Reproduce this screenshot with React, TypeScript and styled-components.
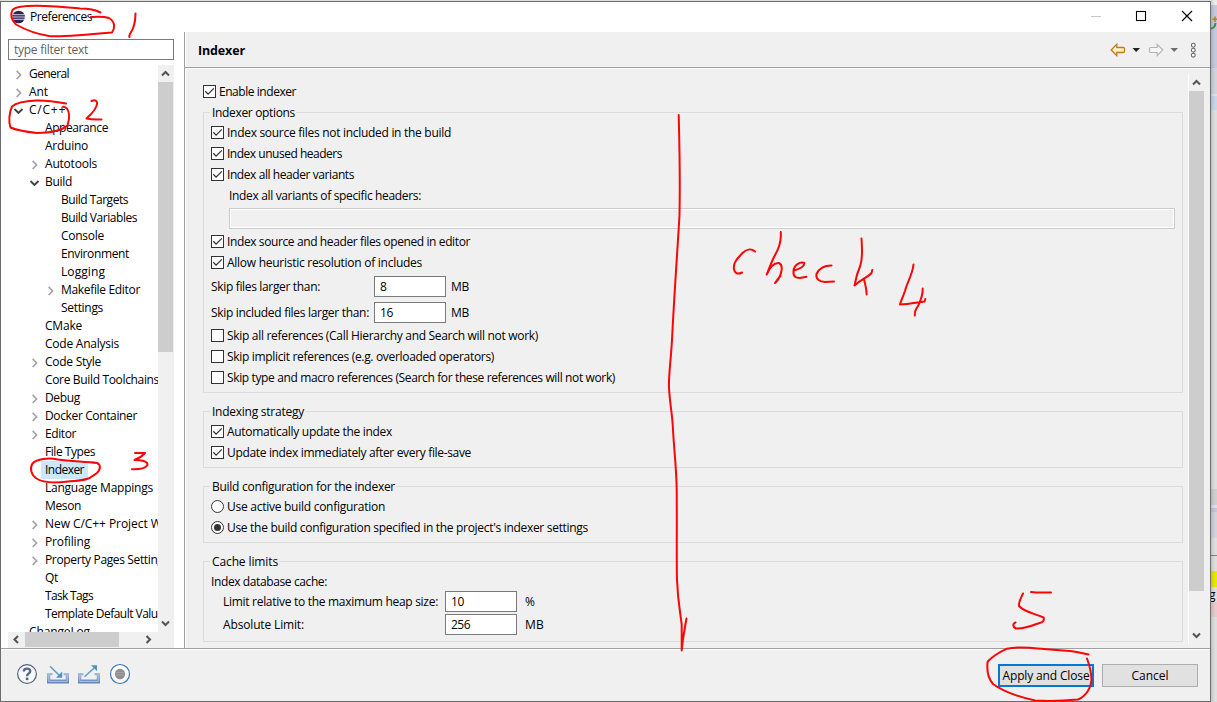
import React, { useLayoutEffect, useRef, useState } from 'react';
import styled, { createGlobalStyle, css } from 'styled-components';

const GlobalStyle = createGlobalStyle`
  *, *::before, *::after { box-sizing: border-box; }
  body { margin: 0; overflow: hidden; }
`;

/* ---------- desktop behind the window ---------- */

const Desktop = styled.div`
  position: relative;
  width: 1217px;
  height: 702px;
  overflow: hidden;
  display: grid;
  grid-template-columns: 1211px 6px;
  background: #dedede;
  font-family: 'Open Sans', 'Noto Sans', sans-serif;
  font-size: 12px;
  line-height: 18px;
  color: #000;
`;

const BackdropStrip = styled.div`
  display: flex;
  flex-direction: column;
  overflow: hidden;
`;

const Band = styled.div<{ $h: number; $c: string }>`
  flex: none;
  height: ${(p) => p.$h}px;
  background: linear-gradient(to right, rgba(0, 0, 0, 0.12), transparent 4px) ${(p) => p.$c};
  line-height: ${(p) => p.$h}px;
  text-indent: -2px;
  svg { display: block; }
`;

/* ---------- window frame ---------- */

const Window = styled.div`
  margin-top: 1px;
  height: 701px;
  display: flex;
  flex-direction: column;
  border: 1px solid #6b6b6b;
  background: #f0f0f0;
`;

const TitleBar = styled.div`
  flex: none;
  height: 30px;
  display: flex;
  align-items: center;
  padding-left: 10px;
  background: #fff;
`;

const TitleText = styled.div`
  margin-left: 4px;
`;

const WindowButtons = styled.div`
  margin-left: auto;
  display: flex;
  svg { display: block; }
`;

const Body = styled.div`
  flex: none;
  height: 616px;
  display: flex;
`;

/* ---------- left navigation ---------- */

const Sidebar = styled.div`
  width: 183px;
  padding: 7px 0 0 7px;
  background: #fff;
`;

const FilterBox = styled.div`
  width: 166px;
  height: 21px;
  border: 1px solid #7a7a7a;
  padding: 0 0 0 5px;
  line-height: 20px;
  color: #5f5f5f;
`;

const TreePane = styled.div`
  margin-top: 5px;
  width: 166px;
  height: 583px;
  display: grid;
  grid-template-columns: 150px 16px;
  grid-template-rows: 567px 16px;
`;

const TreeList = styled.div`
  overflow: hidden;
`;

const TreeRow = styled.div<{ $depth: number }>`
  height: 18px;
  display: flex;
  padding-left: ${(p) => 5 + p.$depth * 16}px;
`;

const ArrowSlot = styled.span`
  flex: none;
  width: 12px;
  height: 18px;
  svg { display: block; }
`;

const TreeLabel = styled.span<{ $selected?: boolean }>`
  padding: 0 4px;
  white-space: nowrap;
  ${(p) => p.$selected && css`background: #cce8ff;`}
`;

/* ---------- scrollbars ---------- */

const VScroll = styled.div<{ $w: number }>`
  width: ${(p) => p.$w}px;
  display: flex;
  flex-direction: column;
  background: #f0f0f0;
  svg { display: block; flex: none; }
`;

const VThumb = styled.div<{ $h: number }>`
  width: 15px;
  height: ${(p) => p.$h}px;
  background: #cdcdcd;
`;

const HScroll = styled.div`
  grid-column: 1 / 3;
  display: flex;
  background: #f0f0f0;
  svg { display: block; flex: none; }
`;

const HThumb = styled.div`
  width: 94px;
  height: 15px;
  margin: 0 22px 0 1px;
  background: #cdcdcd;
`;

const Spacer = styled.div`
  flex: 1;
`;

/* ---------- right page ---------- */

const Page = styled.div`
  flex: 1;
  border-left: 1px solid #a0a0a0;
  box-shadow: inset 1px 0 0 #fff;
  display: flex;
  flex-direction: column;
`;

const PageHeader = styled.div`
  height: 36px;
  display: flex;
  align-items: center;
  padding: 0 8px 0 13px;
  border-bottom: 1px solid #a0a0a0;
  box-shadow: 0 1px 0 #fff;
`;

const PageTitle = styled.div`
  font-size: 12.5px;
  font-weight: 700;
  padding-top: 3px;
`;

const HeaderTools = styled.div`
  margin-left: auto;
  padding-top: 1px;
  svg { display: block; }
`;

const PageContent = styled.div`
  flex: 1;
  display: flex;
  padding: 6px 0 0 18px;
`;

const Form = styled.div`
  width: 980px;
  padding-top: 9px;
`;

const FormScroll = styled.div`
  margin-left: 5px;
  height: 570px;
  border-left: 1px solid #fff;
  display: flex;
`;

const Group = styled.div<{ $h: number; $mt: number }>`
  height: ${(p) => p.$h}px;
  margin-top: ${(p) => p.$mt}px;
  border: 1px solid #dcdcdc;
  padding-left: 7px;
`;

const Legend = styled.div`
  width: max-content;
  height: 18px;
  margin-top: -9px;
  padding: 0 1px 0 2px;
  margin-left: -1px;
  background: #f0f0f0;
`;

const Row = styled.div<{ $h?: number; $mt?: number; $indent?: number }>`
  height: ${(p) => p.$h ?? 21}px;
  margin-top: ${(p) => p.$mt ?? 0}px;
  padding-left: ${(p) => p.$indent ?? 0}px;
  display: flex;
  align-items: center;
  white-space: nowrap;
`;

const CheckBox = styled.span`
  flex: none;
  width: 13px;
  height: 13px;
  margin-right: 3px;
  border: 1px solid #333;
  background: #fff;
  svg { display: block; }
`;

const Radio = styled.span`
  flex: none;
  width: 13px;
  height: 13px;
  margin-right: 3px;
  display: grid;
  place-items: center;
  border: 1px solid #333;
  border-radius: 50%;
  background: #fff;
`;

const RadioDot = styled.span`
  width: 7px;
  height: 7px;
  border-radius: 50%;
  background: #333;
`;

const FieldLabel = styled.span<{ $w: number }>`
  width: ${(p) => p.$w}px;
`;

const NumberField = styled.div`
  width: 72px;
  height: 21px;
  border: 1px solid #7a7a7a;
  background: #fff;
  padding-left: 5px;
  line-height: 19px;
`;

const Unit = styled.span<{ $gap: number }>`
  margin-left: ${(p) => p.$gap}px;
`;

const DisabledField = styled.div`
  width: 946px;
  height: 21px;
  margin: 2px 0 0 18px;
  border: 1px solid #cccccc;
  box-shadow: inset 0 0 0 1px #fff;
`;

/* ---------- footer ---------- */

const Footer = styled.div`
  flex: 1;
  display: flex;
  align-items: flex-start;
  padding: 13px 12px 0 16px;
  border-top: 1px solid #a0a0a0;
  box-shadow: inset 0 1px 0 #fff;
  svg { display: block; margin-top: 1px; }
`;

const PushButton = styled.div<{ $primary?: boolean }>`
  width: 96px;
  height: 23px;
  margin: 2px 0 0 8px;
  display: flex;
  align-items: center;
  justify-content: center;
  white-space: nowrap;
  background: #e1e1e1;
  border: ${(p) => (p.$primary ? '2px solid #0078d7' : '1px solid #adadad')};
`;

const InkLayer = styled.svg`
  position: absolute;
  left: 0;
  top: 0;
  pointer-events: none;
`;

/* ---------- text tracked to a fixed advance ---------- */

const Tracked = styled.span`
  display: inline-block;
  white-space: pre;
`;

function T({ w, children }: { w: number; children: string }) {
  const ref = useRef<HTMLSpanElement>(null);
  const [spacing, setSpacing] = useState(0);
  useLayoutEffect(() => {
    const el = ref.current;
    if (el) setSpacing((w - el.getBoundingClientRect().width) / children.length);
  }, [w, children]);
  return (
    <Tracked ref={ref} style={{ letterSpacing: spacing }}>
      {children}
    </Tracked>
  );
}

/* ---------- small parts ---------- */

function CheckMark() {
  return (
    <svg width="11" height="11" viewBox="0 0 11 11">
      <path d="M1.3 5.3 L4.1 8.1 L9.8 2.4" fill="none" stroke="#333" strokeWidth="1.3" />
    </svg>
  );
}

function Check({ on, w, h, children }: { on?: boolean; w: number; h?: number; children: string }) {
  return (
    <Row $h={h}>
      <CheckBox>{on && <CheckMark />}</CheckBox>
      <T w={w}>{children}</T>
    </Row>
  );
}

function RadioRow({ on, w, children }: { on?: boolean; w: number; children: string }) {
  return (
    <Row>
      <Radio>{on && <RadioDot />}</Radio>
      <T w={w}>{children}</T>
    </Row>
  );
}

type Dir = 'up' | 'down' | 'left' | 'right';
const chevrons: Record<Dir, string> = {
  up: 'M4 10.5 L7.5 7 L11 10.5',
  down: 'M4 6.5 L7.5 10 L11 6.5',
  left: 'M10 4 L6.5 7.5 L10 11',
  right: 'M5.5 4 L9 7.5 L5.5 11',
};

function ScrollArrow({ dir, size = 17 }: { dir: Dir; size?: number }) {
  return (
    <svg width="16" height={size} viewBox={`0 0 16 ${size}`}>
      <path d={chevrons[dir]} fill="none" stroke="#555" strokeWidth="2.1" />
    </svg>
  );
}

interface Node {
  d: number;
  t: string;
  w: number;
  a?: 'open' | 'closed';
  sel?: boolean;
}

const nodes: Node[] = [
  { d: 0, t: 'General', w: 40, a: 'closed' },
  { d: 0, t: 'Ant', w: 19, a: 'closed' },
  { d: 0, t: 'C/C++', w: 37, a: 'open' },
  { d: 1, t: 'Appearance', w: 63 },
  { d: 1, t: 'Arduino', w: 43 },
  { d: 1, t: 'Autotools', w: 52, a: 'closed' },
  { d: 1, t: 'Build', w: 27, a: 'open' },
  { d: 2, t: 'Build Targets', w: 67 },
  { d: 2, t: 'Build Variables', w: 76 },
  { d: 2, t: 'Console', w: 43 },
  { d: 2, t: 'Environment', w: 68 },
  { d: 2, t: 'Logging', w: 44 },
  { d: 2, t: 'Makefile Editor', w: 79, a: 'closed' },
  { d: 2, t: 'Settings', w: 42 },
  { d: 1, t: 'CMake', w: 37 },
  { d: 1, t: 'Code Analysis', w: 74 },
  { d: 1, t: 'Code Style', w: 56, a: 'closed' },
  { d: 1, t: 'Core Build Toolchains', w: 114 },
  { d: 1, t: 'Debug', w: 35, a: 'closed' },
  { d: 1, t: 'Docker Container', w: 92, a: 'closed' },
  { d: 1, t: 'Editor', w: 31, a: 'closed' },
  { d: 1, t: 'File Types', w: 50 },
  { d: 1, t: 'Indexer', w: 39, sel: true },
  { d: 1, t: 'Language Mappings', w: 108 },
  { d: 1, t: 'Meson', w: 36 },
  { d: 1, t: 'New C/C++ Project Wizard', w: 144, a: 'closed' },
  { d: 1, t: 'Profiling', w: 45, a: 'closed' },
  { d: 1, t: 'Property Pages Settings', w: 124, a: 'closed' },
  { d: 1, t: 'Qt', w: 13 },
  { d: 1, t: 'Task Tags', w: 48 },
  { d: 1, t: 'Template Default Values', w: 124 },
  { d: 0, t: 'ChangeLog', w: 61 },
];

function TreeArrow({ kind }: { kind?: 'open' | 'closed' }) {
  return (
    <ArrowSlot>
      {kind && (
        <svg width="12" height="18" viewBox="0 0 12 18">
          {kind === 'open' ? (
            <path d="M1.5 8 L5.5 12 L9.5 8" fill="none" stroke="#404040" strokeWidth="1.8" />
          ) : (
            <path d="M3.6 5.8 L7.6 9.9 L3.6 14" fill="none" stroke="#a6a6a6" strokeWidth="1.7" />
          )}
        </svg>
      )}
    </ArrowSlot>
  );
}

function EclipseIcon() {
  return (
    <svg width="15" height="14" viewBox="0 0 15 14">
      <circle cx="7.6" cy="7" r="6.3" fill="#2c2255" />
      <path d="M1.6 4.700 H13.800 M0.800 7 H14.400 M1.600 9.300 H13.800" stroke="#e8e8f4" strokeWidth="0.9" />
    </svg>
  );
}

function HeaderIcons() {
  return (
    <svg width="92" height="18" viewBox="0 0 92 18">
      <defs>
        <linearGradient id="gold" x1="0" y1="0" x2="0" y2="1">
          <stop offset="0" stopColor="#fff" />
          <stop offset="1" stopColor="#ffe39a" />
        </linearGradient>
      </defs>
      <path
        d="M1.2 9 L6.8 3.4 V6.5 H13.2 Q14.5 6.5 14.5 7.7 V10.3 Q14.5 11.5 13.2 11.5 H6.8 V14.6 Z"
        fill="url(#gold)"
        stroke="#bb7d14"
        strokeWidth="1.3"
      />
      <path d="M22.5 7 H30 L26.2 11 Z" fill="#222" />
      <path
        d="M52.8 9 L47.2 3.4 V6.5 H40.8 Q39.5 6.5 39.5 7.7 V10.3 Q39.5 11.5 40.8 11.5 H47.2 V14.6 Z"
        fill="#f6f6f6"
        stroke="#b4b4b4"
        strokeWidth="1.2"
      />
      <path d="M60.5 7 H68 L64.2 11 Z" fill="#6e6e6e" />
      <g fill="#fff" stroke="#6a6a6a" strokeWidth="1.1">
        <circle cx="83.3" cy="4.2" r="1.9" />
        <circle cx="83.3" cy="9.2" r="1.9" />
        <circle cx="83.3" cy="14.2" r="1.9" />
      </g>
    </svg>
  );
}

function FooterIcons() {
  return (
    <svg width="118" height="22" viewBox="0 0 118 22">
      <defs>
        <linearGradient id="tray" x1="0" y1="0" x2="0" y2="1">
          <stop offset="0" stopColor="#a9bddc" />
          <stop offset="1" stopColor="#5f83bb" />
        </linearGradient>
      </defs>
      <circle cx="10" cy="11" r="9.4" fill="#f7f9fb" stroke="#53647f" strokeWidth="1.2" />
      <path
        d="M6.8 8.6 Q6.8 5.6 10 5.6 Q13.2 5.6 13.2 8.2 Q13.2 9.8 11.4 10.8 Q10.1 11.6 10.1 13.2"
        fill="none"
        stroke="#55688a"
        strokeWidth="2.4"
      />
      <rect x="8.8" y="14.6" width="2.6" height="2.5" fill="#55688a" />
      <g fill="url(#tray)">
        <path d="M30 10 H35.5 V12.3 H33.3 V16.5 H48.7 V12.3 H46.5 V10 H52 V20.6 H30 Z" />
        <path d="M61 10 H66.5 V12.3 H64.3 V16.5 H79.7 V12.3 H77.5 V10 H83 V20.6 H61 Z" />
      </g>
      <path d="M31.8 11.5 V18.500 H50.2 V11.5 M62.8 11.5 V18.500 H81.2 V11.5" fill="none" stroke="#c0cfe6" strokeWidth="0.7" />
      <path d="M33 3.2 L43.2 13.2" stroke="#5b9bc6" strokeWidth="1.5" />
      <path d="M45.2 8.6 V14.8 H39 Z" fill="#4e94c2" />
      <path d="M67.5 13.8 L78 4.3" stroke="#5b9bc6" strokeWidth="1.5" />
      <path d="M80 2.2 V8.2 L74 2.2 Z" fill="#4e94c2" />
      <circle cx="103" cy="11" r="9.5" fill="#fbfcfd" stroke="#4279ae" strokeWidth="1.2" />
      <circle cx="103" cy="11" r="5.2" fill="#8f8f8f" />
      <path d="M98.2 9.6 H107.8 M98 12.2 H108" stroke="#aaa" strokeWidth="0.8" />
    </svg>
  );
}

function Ink() {
  return (
    <InkLayer width="1217" height="702" viewBox="0 0 1217 702">
      <g fill="none" stroke="#fb0505" strokeWidth="2" strokeLinecap="round" strokeLinejoin="round">
        {/* step 1 */}
        <path d="M100.500 12.500 C95 9.500 88 8.500 80 8.500 C70 8 62 6.500 45 6 C30 5.500 16 6 12.500 10 C10 14 11 20 16 24.500 C24 29 36 34 49 36 C62 37 80 35.500 112 32.500 C115 28 115.500 22 109 18 C103 16 98 16.500 91 17" />
        <path d="M135.500 13.500 C135.500 22 133.500 29 130 34 C129 36 129.500 37 129.500 37" />
        {/* step 2 */}
        <path d="M66 103.500 C55 101.500 46 100 36 100.500 C25 101 16 103 12 106.500 C9 113 8.500 122 10.500 127.500 C17 130.500 28 132 37 133 C50 133 62 130 67.500 125.500 C69.500 119 69.500 112 67 108.500 C66 107.500 64 107 63 106.800" />
        <path d="M91.500 101 C94 99.800 97 100.300 97.200 103 C97 109 91 114.500 86.500 118.500 C92 119.800 97 119.300 101.500 119.500" />
        {/* step 3 */}
        <path d="M97.500 463 C82 461.500 70 461 58 459.500 C48 457.500 37 459 32.500 463.500 C29.500 468 31 475 36.500 478.500 C43 483 56 483 68 481.500 C80 480.500 88 480 91 477 C98 473 101 470 99.500 465 C98 462.500 95 462.200 92 462.500" />
        <path d="M135 453 H145 C142 456.500 139 458.500 134.500 460 C141 460 148 461 147.500 465 C145 469 138 469.500 132 469.300" />
        {/* step 4 */}
        <path d="M678.700 115 C679.500 145 680 190 679.500 215 C677.500 250 674.500 290 672 340 C670.500 365 668.500 375 669 388 C670 405 672.500 415 673 430 C674.500 455 676.500 470 676.700 490 C677 530 676.500 565 677 580 C678 605 680.500 612 681.700 625 V650.500 C682.500 640 684.500 630 686.500 618.500" />
        <path d="M755 251.500 C751 248 746 249.500 742.500 253 C738 258 733.500 262 733.800 268 C734.500 274 738 274.500 742 272.500" />
        <path d="M780.800 232 C781.500 243 778 250 774 257 C770 265 768 272 766.700 274.500 C770 267 774 262.500 779 263 C784 265 781 275 778.500 279 L775 283 C777 280 779 277.500 780.500 276" />
        <path d="M794 270.500 C798 269.500 804 267 804.500 263 C800 261.500 794 265 793.500 271 C793 277 796 278 800 278 L806.500 276.800" />
        <path d="M831.500 265.500 C825 265.500 819 268.500 816.500 274 C815.500 279.500 820 282 825 282 L834 281.500" />
        <path d="M861.500 238.500 C862 248 863 257 860.500 265 C857 273 855.500 280 854.500 285.500 C861 279.500 868 277 871.500 273 L872.300 270 M864 279.500 C865.500 285 866.500 290 866.700 294.500" />
        <path d="M913.500 264.500 C912.500 275 907 282 905 291 C903 297 901 300 900 304.500 C908 304.500 917 302.500 924.500 301.500 L925.300 299 M922.700 288.500 C923 296 920.500 301 918 306 C916 310 914.500 309 914.800 315.500" />
        {/* step 5 */}
        <path d="M1023 593.500 C1021 598 1018.500 602 1019 606 C1024 612 1036 614 1043.500 617.500 C1045 621 1042 622.500 1038 623.500 C1030 626.500 1022 629 1016 628.500 C1013 627 1012 624 1015.500 622.500 M1031 592 L1036 592.500 H1051" />
        <path d="M1088.500 654.500 C1080 652.500 1075 651.500 1070 651 C1050 650 1040 648.500 1030 647.800 C1020 647 1012 647.500 1007 648.700 C1000 652 992 657 987.700 661.500 C986.500 670 988 678 993 684 C1001 690 1015 696 1035 700.500 C1050 701.500 1068 700.500 1078 699.500 C1086 696 1091 688 1091.500 680 C1091.500 672 1089 664 1087 658.500" />
      </g>
    </InkLayer>
  );
}

export default function App() {
  return (
    <>
      <GlobalStyle />
      <Desktop>
        <Window>
          <TitleBar>
            <EclipseIcon />
            <TitleText><T w={62}>Preferences</T></TitleText>
            <WindowButtons>
              <svg width="138" height="28" viewBox="0 0 138 28">
                <path d="M19 13.500 H29" stroke="#c8c8c8" />
                <rect x="64.500" y="8.500" width="9" height="9" fill="none" stroke="#000" strokeWidth="1.100" />
                <path d="M110 8 L120 18 M120 8 L110 18" stroke="#000" strokeWidth="1.200" />
              </svg>
            </WindowButtons>
          </TitleBar>
          <Body>
            <Sidebar>
              <FilterBox><T w={74}>type filter text</T></FilterBox>
              <TreePane>
                <TreeList>
                  {nodes.map((n) => (
                    <TreeRow key={n.t} $depth={n.d}>
                      <TreeArrow kind={n.a} />
                      <TreeLabel $selected={n.sel}><T w={n.w}>{n.t}</T></TreeLabel>
                    </TreeRow>
                  ))}
                </TreeList>
                <VScroll $w={16}>
                  <ScrollArrow dir="up" />
                  <VThumb $h={270} />
                  <Spacer />
                  <ScrollArrow dir="down" />
                </VScroll>
                <HScroll>
                  <ScrollArrow dir="left" size={16} />
                  <HThumb />
                  <ScrollArrow dir="right" size={16} />
                </HScroll>
              </TreePane>
            </Sidebar>
            <Page>
              <PageHeader>
                <PageTitle><T w={47}>Indexer</T></PageTitle>
                <HeaderTools><HeaderIcons /></HeaderTools>
              </PageHeader>
              <PageContent>
                <Form>
                  <Check on h={17} w={77}>Enable indexer</Check>
                  <Group $h={281} $mt={12}>
                    <Legend><T w={83}>Indexer options</T></Legend>
                    <Check on w={224}>Index source files not included in the build</Check>
                    <Check on w={115}>Index unused headers</Check>
                    <Check on w={127}>Index all header variants</Check>
                    <Row $indent={18}><T w={192}>Index all variants of specific headers:</T></Row>
                    <DisabledField />
                    <Row $h={2} />
                    <Check on w={243}>Index source and header files opened in editor</Check>
                    <Check on w={195}>Allow heuristic resolution of includes</Check>
                    <Row $mt={3}>
                      <FieldLabel $w={163}><T w={109}>Skip files larger than:</T></FieldLabel>
                      <NumberField><T w={7}>8</T></NumberField>
                      <Unit $gap={5}><T w={18}>MB</T></Unit>
                    </Row>
                    <Row $mt={5}>
                      <FieldLabel $w={163}><T w={158}>Skip included files larger than:</T></FieldLabel>
                      <NumberField><T w={13}>16</T></NumberField>
                      <Unit $gap={5}><T w={18}>MB</T></Unit>
                    </Row>
                    <Row $h={2} />
                    <Check w={311}>Skip all references (Call Hierarchy and Search will not work)</Check>
                    <Check w={267}>Skip implicit references (e.g. overloaded operators)</Check>
                    <Check w={388}>Skip type and macro references (Search for these references will not work)</Check>
                  </Group>
                  <Group $h={57} $mt={18}>
                    <Legend><T w={92}>Indexing strategy</T></Legend>
                    <Check on w={165}>Automatically update the index</Check>
                    <Check on w={244}>Update index immediately after every file-save</Check>
                  </Group>
                  <Group $h={57} $mt={18}>
                    <Legend><T w={183}>Build configuration for the indexer</T></Legend>
                    <RadioRow w={158}>Use active build configuration</RadioRow>
                    <RadioRow on w={361}>Use the build configuration specified in the project's indexer settings</RadioRow>
                  </Group>
                  <Group $h={81} $mt={18}>
                    <Legend><T w={66}>Cache limits</T></Legend>
                    <Row $h={22}><T w={116}>Index database cache:</T></Row>
                    <Row $indent={12} $h={17}>
                      <FieldLabel $w={222}><T w={215}>Limit relative to the maximum heap size:</T></FieldLabel>
                      <NumberField><T w={13}>10</T></NumberField>
                      <Unit $gap={8}><T w={11}>%</T></Unit>
                    </Row>
                    <Row $indent={12} $mt={4}>
                      <FieldLabel $w={222}><T w={81}>Absolute Limit:</T></FieldLabel>
                      <NumberField><T w={19}>256</T></NumberField>
                      <Unit $gap={8}><T w={19}>MB</T></Unit>
                    </Row>
                  </Group>
                </Form>
                <FormScroll>
                  <VScroll $w={16}>
                    <ScrollArrow dir="up" />
                    <VThumb $h={500} />
                    <Spacer />
                    <ScrollArrow dir="down" />
                  </VScroll>
                </FormScroll>
              </PageContent>
            </Page>
          </Body>
          <Footer>
            <FooterIcons />
            <Spacer />
            <PushButton $primary><T w={87}>Apply and Close</T></PushButton>
            <PushButton><T w={37}>Cancel</T></PushButton>
          </Footer>
        </Window>
        <BackdropStrip>
          <Band $h={5} $c="#ececec" />
          <Band $h={10} $c="#c6c9de" />
          <Band $h={16} $c="#c6c9de">
            <svg width="6" height="16" viewBox="0 0 6 16">
              <path d="M0 13.500 Q4 13 4.500 8" fill="none" stroke="#3a8a55" strokeWidth="2" />
              <path d="M4 1.500 V7 M1.200 4.200 H6" stroke="#b8860b" strokeWidth="1.600" />
            </svg>
          </Band>
          <Band $h={37} $c="#c6c9de" />
          <Band $h={26} $c="#d3d3dc" />
          <Band $h={2} $c="#e2e2e6" />
          <Band $h={14} $c="#c9d6e6" />
          <Band $h={379} $c="#dedede" />
          <Band $h={16} $c="#cfcfcf" />
          <Band $h={3} $c="#dedee4" />
          <Band $h={4} $c="#c3c6da" />
          <Band $h={26} $c="#d3d3dc" />
          <Band $h={17} $c="#dedede" />
          <Band $h={1} $c="#808080" />
          <Band $h={15} $c="#dedede" />
          <Band $h={16} $c="#e8e800" />
          <Band $h={15} $c="#dedede">g</Band>
          <Band $h={15} $c="#e6cccc" />
          <Band $h={85} $c="#dedede" />
        </BackdropStrip>
        <Ink />
      </Desktop>
    </>
  );
}
